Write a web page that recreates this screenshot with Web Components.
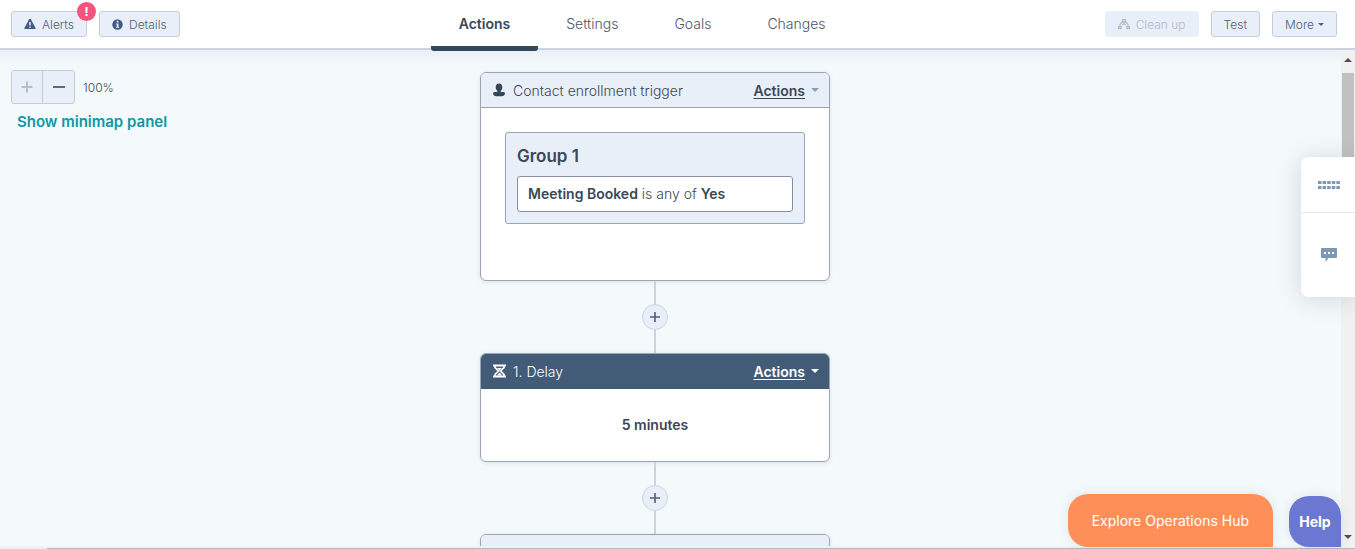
<!DOCTYPE html>
<html lang="en">
<head>
<meta charset="utf-8">
<title>Workflow editor</title>
<style>
html, body {
  height: 100%;
}

body {
  margin: 0;
  overflow: hidden;
  font-family: Inter, "Open Sans", "Liberation Sans", sans-serif;
  font-size: 14px;
  font-weight: 300;
  color: #3b4757;
  --line: #9aa5b5;
  --soft: #e9eff8;
  --navy: #425b76;
}
</style>
</head>
<body>
<workflow-app></workflow-app>

<script>
const icons = {
  warning: '<svg viewBox="0 0 12 12" width="12" height="12"><path d="M6 .8Q6.5.8 6.800 1.300L11.600 10Q12 11 11 11H1Q0 11 .4 10L5.200 1.300Q5.500.8 6 .8Z" fill="currentColor"/><path d="M6 4v3.400M6 8.400v1.400" stroke="#eaf0f9" stroke-width="1.500"/></svg>',
  info: '<svg viewBox="0 0 12 12" width="11" height="11"><circle cx="6" cy="6" r="5.700" fill="currentColor"/><path d="M5.200 2h1.800v1.700H5.200zM4.500 4.800H7v3.600h.8v1.200H4.400V8.400h.8V6h-.7z" fill="#eaf0f9"/></svg>',
  tree: '<svg viewBox="0 0 12 12" width="12" height="12"><path d="M4 1h4v3.500H4zM0 8h3.800v3.200H0zM8.200 8H12v3.200H8.200z" fill="currentColor"/><path d="M4.500 3.800 2 6.200V8M7.500 3.800 10 6.200V8M6 4v2.500M4.500 7l1.500-1.500L7.500 7" fill="none" stroke="currentColor" stroke-width="1.200"/><path d="M5.300 2.200h1.400v1H5.300zM1.300 9.200h1.200v.9H1.300zM9.500 9.200h1.200v.9H9.500z" fill="#eaf0f9"/></svg>',
  person: '<svg viewBox="0 0 12 14" width="12" height="14"><path d="M6 .5C8.200.5 9.300 2 9.300 4.200 9.300 6 8.500 7.200 7.600 8v.8c1.600.4 3.600.2 4.200 1 .5 1-.2 2.300-1.300 2.900C9.200 13.400 2.800 13.400 1.500 12.700.4 12.100-.3 10.800.2 9.800c.6-.8 2.600-.6 4.200-1V8C3.500 7.200 2.700 6 2.700 4.200 2.700 2 3.800.5 6 .5Z" fill="currentColor"/></svg>',
  hourglass: '<svg viewBox="0 0 14 14" width="14" height="14"><path d="M0 1.500h13M0 12.500h13" stroke="currentColor" stroke-width="2"/><path d="M2 2v1.600L5.500 7 2 10.400V12M11 2v1.600L7.500 7l3.500 3.400V12" fill="none" stroke="currentColor" stroke-width="1.600"/><path d="M4 4h5L6.500 6.500zM6.500 8.500l3 3h-6z" fill="currentColor"/></svg>',
  plus: '<svg viewBox="0 0 12 12" width="12" height="12"><path d="M6 .5v11M.5 6h11" stroke="currentColor" stroke-width="2"/></svg>',
  minus: '<svg viewBox="0 0 12 12" width="12" height="12"><path d="M0 6h12" stroke="currentColor" stroke-width="2"/></svg>',
  caret: '<svg viewBox="0 0 8 4" width="8" height="4"><path d="M0 0h8L4 4z" fill="currentColor"/></svg>',
  'caret-small': '<svg viewBox="0 0 6 3" width="6" height="3"><path d="M0 0h6L3 3z" fill="currentColor"/></svg>',
  chat: '<svg viewBox="0 0 16 14" width="16" height="14"><path d="M1 0h14q1 0 1 1v8q0 1-1 1H7.500L4.500 14V10H1Q0 10 0 9V1Q0 0 1 0z" fill="currentColor"/><path d="M3 4h2v2H3zM7 4h2v2H7zM11 4h2v2h-2z" fill="#fff"/></svg>',
  grid: '<svg viewBox="0 0 22 8" width="22" height="8"><path d="M0 1.500h22M0 6.500h22" stroke="currentColor" stroke-width="3" stroke-dasharray="3.500 1.100"/></svg>'
};

class UiIcon extends HTMLElement {
  constructor() {
    super();
    this.attachShadow({ mode: 'open' });
  }

  connectedCallback() {
    this.shadowRoot.innerHTML = `
<style>
:host { display: inline-flex; }
svg { display: block; }
</style>
${icons[this.getAttribute('name')]}`;
  }
}

class UiButton extends HTMLElement {
  constructor() {
    super();
    this.attachShadow({ mode: 'open' });
  }

  connectedCallback() {
    const disabled = this.hasAttribute('disabled') ? 'disabled' : '';
    this.shadowRoot.innerHTML = `
<style>
:host { display: block; }
button {
  display: flex;
  align-items: center;
  gap: 6px;
  height: 26px;
  padding: 0 12px;
  border: 1px solid #c3cddc;
  border-radius: 3px;
  background: var(--soft);
  color: #506079;
  font: inherit;
  font-size: 12px;
  white-space: nowrap;
  cursor: pointer;
}
:host([menu]) button { gap: 4px; }
button:disabled {
  border-color: var(--soft);
  color: #b0bac8;
  cursor: default;
}
</style>
<button type="button" ${disabled}><slot></slot></button>`;
  }
}

class TopBar extends HTMLElement {
  constructor() {
    super();
    this.attachShadow({ mode: 'open' });
    this.shadowRoot.innerHTML = `
<style>
:host {
  display: flex;
  justify-content: space-between;
  align-items: flex-start;
  height: 48px;
  padding: 0 18px 0 11px;
  background: #fff;
  border-bottom: 2px solid #cbd4de;
  position: relative;
  z-index: 2;
}
.group {
  display: flex;
  gap: 12px;
  padding-top: 11px;
}
.alerts { position: relative; }
.alerts ui-icon, .details ui-icon { color: #425b86; }
/* count bubble sits over the corner of the button */
.badge {
  position: absolute;
  top: -9px;
  right: -9px;
  width: 19px;
  height: 19px;
  border-radius: 50%;
  background: #f2547d;
  color: #fff;
  font-size: 12px;
  font-weight: 700;
  line-height: 19px;
  text-align: center;
}
nav { display: flex; }
nav a {
  height: 46px;
  padding: 0 28px;
  border-bottom: 5px solid transparent;
  border-radius: 3px;
  color: #4a5568;
  font-size: 14px;
  line-height: 48px;
  text-decoration: none;
}
nav a.active {
  color: #33475b;
  font-weight: 600;
  background: linear-gradient(#33475b, #33475b) bottom / 100% 5px no-repeat border-box;
}
</style>
<div class="group">
  <div class="alerts">
    <ui-button><ui-icon name="warning"></ui-icon>Alerts</ui-button>
    <span class="badge">!</span>
  </div>
  <ui-button class="details"><ui-icon name="info"></ui-icon>Details</ui-button>
</div>
<nav>
  <a href="#actions" class="active">Actions</a>
  <a href="#settings">Settings</a>
  <a href="#goals">Goals</a>
  <a href="#changes">Changes</a>
</nav>
<div class="group">
  <ui-button disabled><ui-icon name="tree"></ui-icon>Clean up</ui-button>
  <ui-button>Test</ui-button>
  <ui-button menu>More<ui-icon name="caret-small"></ui-icon></ui-button>
</div>`;
  }
}

class ZoomControls extends HTMLElement {
  constructor() {
    super();
    this.attachShadow({ mode: 'open' });
    this.shadowRoot.innerHTML = `
<style>
:host { display: block; }
.row {
  display: flex;
  align-items: center;
  gap: 8px;
}
.buttons {
  display: flex;
  border: 1px solid #c3cddc;
  border-radius: 3px;
  background: var(--soft);
}
button {
  display: flex;
  align-items: center;
  justify-content: center;
  width: 31px;
  height: 32px;
  padding: 0;
  border: 0;
  background: none;
  color: #5a6a84;
}
button:disabled {
  color: #b3bfcb;
  border-right: 1px solid #c3cddc;
}
.level { font-size: 12px; }
a {
  display: inline-block;
  margin: 8px 6px;
  color: #0e97a5;
  font-size: 15px;
  font-weight: 600;
  line-height: 20px;
  text-decoration: none;
}
</style>
<div class="row">
  <div class="buttons">
    <button type="button" aria-label="Zoom in" disabled><ui-icon name="plus"></ui-icon></button>
    <button type="button" aria-label="Zoom out"><ui-icon name="minus"></ui-icon></button>
  </div>
  <span class="level">100%</span>
</div>
<a href="#minimap">Show minimap panel</a>`;
  }
}

class FlowCard extends HTMLElement {
  constructor() {
    super();
    this.attachShadow({ mode: 'open' });
  }

  connectedCallback() {
    const heading = this.getAttribute('heading');
    const bar = heading ? `
  <span class="mark"><ui-icon name="${this.getAttribute('icon')}"></ui-icon></span>
  <h2>${heading}</h2>
  <button type="button"><span class="label">Actions</span><ui-icon name="caret"></ui-icon></button>` : '';

    this.shadowRoot.innerHTML = `
<style>
:host {
  display: block;
  box-sizing: border-box;
  width: 350px;
  border: 1px solid var(--line);
  border-radius: 6px;
  background: #fff;
  box-shadow: 0 1px 4px rgba(45, 62, 80, 0.12);
  overflow: hidden;
}
header {
  display: flex;
  align-items: center;
  height: 34px;
  padding: 0 10px 0 12px;
  border-bottom: 1px solid var(--line);
  background: var(--soft);
}
ui-icon { color: #33475b; }
.mark {
  display: flex;
  width: 20px;
}
h2 {
  flex: 1;
  margin: 0;
  font-size: 14px;
  font-weight: 300;
}
button {
  display: flex;
  align-items: center;
  gap: 6px;
  padding: 0;
  border: 0;
  background: none;
  color: inherit;
  font: inherit;
  font-size: 14px;
  font-weight: 600;
}
.label {
  text-decoration: underline;
  text-underline-offset: 2px;
}
button ui-icon { color: #8c9db0; }
:host([dark]) header {
  background: var(--navy);
  border-color: var(--navy);
  color: #fff;
}
:host([dark]) ui-icon { color: #fff; }
</style>
<header>${bar}</header>
<slot></slot>`;
  }
}

class FilterGroup extends HTMLElement {
  constructor() {
    super();
    this.attachShadow({ mode: 'open' });
    this.shadowRoot.innerHTML = `
<style>
:host {
  display: block;
  margin: 24px 24px 56px;
  padding: 11px;
  border: 1px solid var(--line);
  border-radius: 3px;
  background: var(--soft);
}
h3 {
  margin: 0 0 8px;
  font-size: 17px;
  font-weight: 600;
  line-height: 24px;
}
.rule {
  padding: 0 10px;
  border: 1px solid #8591a3;
  border-radius: 3px;
  background: #fff;
  font-size: 14px;
  line-height: 34px;
}
</style>
<h3><slot name="title"></slot></h3>
<div class="rule"><slot></slot></div>`;
  }
}

class FlowConnector extends HTMLElement {
  constructor() {
    super();
    this.attachShadow({ mode: 'open' });
    this.shadowRoot.innerHTML = `
<style>
:host {
  display: flex;
  flex-direction: column;
  align-items: center;
}
.line {
  width: 2px;
  height: 23px;
  background: #cbd3dc;
}
button {
  display: flex;
  align-items: center;
  justify-content: center;
  width: 26px;
  height: 26px;
  padding: 0;
  border: 1px solid #cbd6e2;
  border-radius: 50%;
  background: var(--soft);
  color: #506079;
}
</style>
<span class="line"></span>
<button type="button" aria-label="Add action"><svg viewBox="0 0 10 10" width="10" height="10"><path d="M5 0v10M0 5h10" stroke="currentColor" stroke-width="1.600"/></svg></button>
<span class="line"></span>`;
  }
}

class SideDock extends HTMLElement {
  constructor() {
    super();
    this.attachShadow({ mode: 'open' });
    this.shadowRoot.innerHTML = `
<style>
:host {
  display: block;
  width: 54px;
  border-radius: 8px 0 0 8px;
  background: #fff;
  box-shadow: 0 2px 24px rgba(45, 62, 80, 0.18);
}
button {
  display: flex;
  align-items: center;
  justify-content: center;
  width: 100%;
  height: 84px;
  padding: 0 0 0 2px;
  border: 0;
  background: none;
  color: #7c98b6;
}
.keys {
  height: 56px;
  border-bottom: 1px solid #e5e9ee;
}
</style>
<button type="button" class="keys" aria-label="Keyboard shortcuts"><ui-icon name="grid"></ui-icon></button>
<button type="button" aria-label="Comments"><ui-icon name="chat"></ui-icon></button>`;
  }
}

class HelpBar extends HTMLElement {
  constructor() {
    super();
    this.attachShadow({ mode: 'open' });
    this.shadowRoot.innerHTML = `
<style>
:host {
  display: flex;
  align-items: flex-end;
  gap: 16px;
}
button {
  height: 53px;
  padding: 0 24px;
  border: 0;
  border-radius: 20px 20px 0 20px;
  background: #ff8f59;
  color: #fff;
  font: inherit;
  font-size: 14px;
  font-weight: 400;
  box-shadow: 0 0 12px rgba(45, 62, 80, 0.1);
}
.help {
  min-width: 52px;
  height: 51px;
  padding: 0 10px;
  background: #6a78d1;
  font-weight: 700;
}
</style>
<button type="button">Explore Operations Hub</button>
<button type="button" class="help">Help</button>`;
  }
}

class ScrollRail extends HTMLElement {
  constructor() {
    super();
    this.attachShadow({ mode: 'open' });
    this.shadowRoot.innerHTML = `
<style>
:host {
  display: flex;
  flex-direction: column;
  align-items: center;
  box-sizing: border-box;
  width: 14px;
  padding: 8px 0;
  background: #f1f1f1;
  color: #505050;
}
.thumb {
  width: 12px;
  height: 21%;
  margin: 11px 0 auto;
  background: #c1c1c1;
}
.up { transform: rotate(180deg); }
</style>
<ui-icon class="up" name="caret"></ui-icon>
<span class="thumb"></span>
<ui-icon name="caret"></ui-icon>`;
  }
}

class WorkflowApp extends HTMLElement {
  constructor() {
    super();
    this.attachShadow({ mode: 'open' });
    this.shadowRoot.innerHTML = `
<style>
:host {
  display: flex;
  flex-direction: column;
  height: 100vh;
}
main {
  position: relative;
  display: flex;
  flex: 1;
  min-height: 0;
}
.canvas {
  display: flex;
  flex: 1;
  flex-direction: column;
  align-items: center;
  padding: 22px 31px 0 0;
  border-bottom: 1px solid #f1f1f1;
  overflow: hidden;
  background: linear-gradient(#eaf0f6, #f4f9fb 16px);
}
.canvas > * { flex-shrink: 0; }
.delay {
  margin: 0;
  font-weight: 600;
  line-height: 72px;
  text-align: center;
}
b { font-weight: 600; }
/* panels that float over the canvas */
zoom-controls, side-dock, help-bar { position: absolute; }
zoom-controls {
  top: 20px;
  left: 11px;
}
side-dock {
  top: 107px;
  right: 0;
}
help-bar {
  right: 14px;
  bottom: 0;
}
footer {
  display: flex;
  height: 1px;
  border-top: 1px solid #f1f1f1;
  background: #f1f1f1;
}
footer span {
  flex: 1;
  margin-left: 47px;
  background: #b5b8ba;
}
</style>
<top-bar></top-bar>
<main>
  <div class="canvas">
    <flow-card icon="person" heading="Contact enrollment trigger">
      <filter-group>
        <span slot="title">Group 1</span>
        <b>Meeting Booked</b> is any of <b>Yes</b>
      </filter-group>
    </flow-card>
    <flow-connector></flow-connector>
    <flow-card dark icon="hourglass" heading="1. Delay">
      <p class="delay">5 minutes</p>
    </flow-card>
    <flow-connector></flow-connector>
    <flow-card></flow-card>
  </div>
  <scroll-rail></scroll-rail>
  <zoom-controls></zoom-controls>
  <side-dock></side-dock>
  <help-bar></help-bar>
</main>
<footer><span></span></footer>`;
  }
}

customElements.define('ui-icon', UiIcon);
customElements.define('ui-button', UiButton);
customElements.define('top-bar', TopBar);
customElements.define('zoom-controls', ZoomControls);
customElements.define('flow-card', FlowCard);
customElements.define('filter-group', FilterGroup);
customElements.define('flow-connector', FlowConnector);
customElements.define('side-dock', SideDock);
customElements.define('help-bar', HelpBar);
customElements.define('scroll-rail', ScrollRail);
customElements.define('workflow-app', WorkflowApp);
</script>
</body>
</html>
